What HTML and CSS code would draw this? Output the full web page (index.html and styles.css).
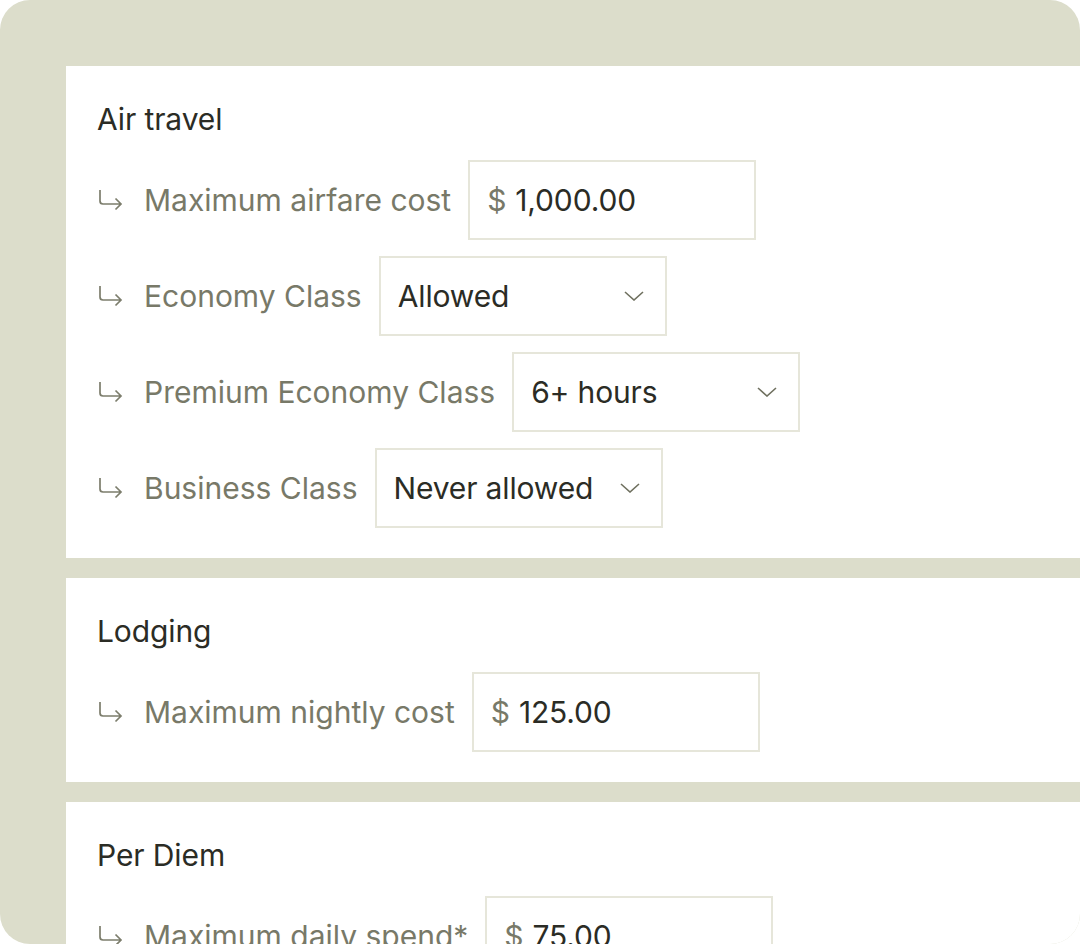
FILE: index.html
```html
<!DOCTYPE html>
<html>
<head>
<meta charset="utf-8">
<link rel="stylesheet" href="styles.css">
</head>
<body>
<div class="panel">
  <section class="card">
    <h2 class="card-title">Air travel</h2>
    <div class="rows">
      <div class="row">
        <svg class="sub" viewBox="0 0 26 24"><path d="M3 3 V14 Q3 17 6 17 H24 M18.5 11.5 L24 17 L18.5 22.5"/></svg>
        <span class="label">Maximum airfare cost</span>
        <div class="field"><span class="cur">$</span><span class="val">1,000.00</span></div>
      </div>
      <div class="row">
        <svg class="sub" viewBox="0 0 26 24"><path d="M3 3 V14 Q3 17 6 17 H24 M18.5 11.5 L24 17 L18.5 22.5"/></svg>
        <span class="label">Economy Class</span>
        <div class="field select"><span class="val">Allowed</span><svg class="chev" viewBox="0 0 20 10"><path d="M1 1 L10 9 L19 1"/></svg></div>
      </div>
      <div class="row">
        <svg class="sub" viewBox="0 0 26 24"><path d="M3 3 V14 Q3 17 6 17 H24 M18.5 11.5 L24 17 L18.5 22.5"/></svg>
        <span class="label">Premium Economy Class</span>
        <div class="field select"><span class="val">6+ hours</span><svg class="chev" viewBox="0 0 20 10"><path d="M1 1 L10 9 L19 1"/></svg></div>
      </div>
      <div class="row">
        <svg class="sub" viewBox="0 0 26 24"><path d="M3 3 V14 Q3 17 6 17 H24 M18.5 11.5 L24 17 L18.5 22.5"/></svg>
        <span class="label">Business Class</span>
        <div class="field select"><span class="val">Never allowed</span><svg class="chev" viewBox="0 0 20 10"><path d="M1 1 L10 9 L19 1"/></svg></div>
      </div>
    </div>
  </section>
  <section class="card">
    <h2 class="card-title">Lodging</h2>
    <div class="rows">
      <div class="row">
        <svg class="sub" viewBox="0 0 26 24"><path d="M3 3 V14 Q3 17 6 17 H24 M18.5 11.5 L24 17 L18.5 22.5"/></svg>
        <span class="label">Maximum nightly cost</span>
        <div class="field"><span class="cur">$</span><span class="val">125.00</span></div>
      </div>
    </div>
  </section>
  <section class="card">
    <h2 class="card-title">Per Diem</h2>
    <div class="rows">
      <div class="row">
        <svg class="sub" viewBox="0 0 26 24"><path d="M3 3 V14 Q3 17 6 17 H24 M18.5 11.5 L24 17 L18.5 22.5"/></svg>
        <span class="label">Maximum daily spend*</span>
        <div class="field"><span class="cur">$</span><span class="val">75.00</span></div>
      </div>
    </div>
  </section>
</div>
</body>
</html>
```
FILE: styles.css
```css
html, body {
  margin: 0;
  padding: 0;
  background: #ffffff;
}
body {
  font-family: Inter, "Noto Sans", sans-serif;
  width: 1080px;
  height: 944px;
  overflow: hidden;
}
.panel {
  box-sizing: border-box;
  width: 1080px;
  height: 944px;
  background: #dcddcb;
  border-radius: 30px;
  padding: 66px 0 0 66px;
  overflow: hidden;
  display: flex;
  flex-direction: column;
  gap: 20px;
}
.card {
  background: #ffffff;
  padding: 32px 0 30px 31px;
  flex-shrink: 0;
}
.card-title {
  margin: 0;
  font-size: 30px;
  line-height: 42px;
  font-weight: 400;
  color: #2b2c25;
  letter-spacing: -0.1px;
}
.rows {
  margin-top: 20px;
  display: flex;
  flex-direction: column;
  gap: 16px;
}
.row {
  display: flex;
  align-items: center;
  height: 80px;
}
.sub {
  width: 26px;
  height: 24px;
  flex-shrink: 0;
  margin-left: 0;
  margin-top: -2px;
  fill: none;
  stroke: #7c7d6c;
  stroke-width: 1.7;
}
.label {
  margin-left: 21px;
  font-size: 30px;
  color: #787968;
  letter-spacing: 0;
  white-space: nowrap;
}
.field {
  box-sizing: border-box;
  margin-left: 17px;
  width: 288px;
  height: 80px;
  border: 2px solid #e6e6da;
  display: flex;
  align-items: center;
  padding: 0 21px 0 17px;
  font-size: 30px;
  color: #2b2c25;
  letter-spacing: -0.15px;
}
.cur {
  color: #787968;
  margin-right: 9px;
}
.select {
  justify-content: space-between;
}
.chev {
  width: 20px;
  height: 10px;
  fill: none;
  stroke: #6f705f;
  stroke-width: 1.6;
}
```
